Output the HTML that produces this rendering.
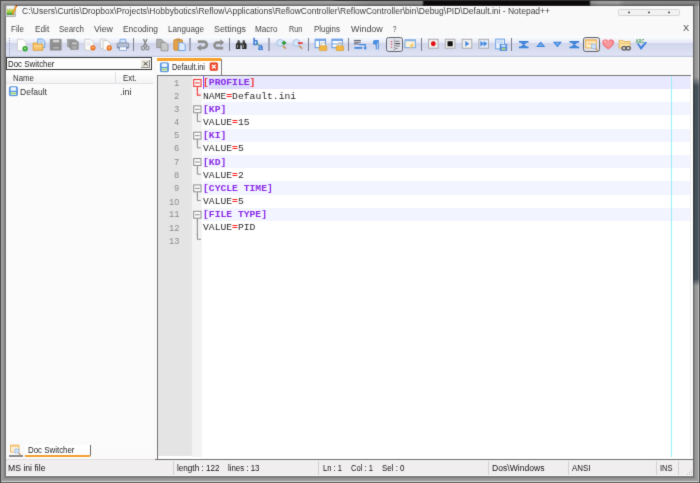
<!DOCTYPE html><html><head><meta charset="utf-8"><title>Notepad++</title><style>

html,body{margin:0;padding:0}
body{width:700px;height:483px;overflow:hidden;position:relative;background:#4c4c4c;font-family:"Liberation Sans",sans-serif}
div,span,svg{position:absolute;box-sizing:border-box}
svg{overflow:visible}
.t{white-space:pre;line-height:1;transform-origin:0 50%;display:block}
.t span{position:static}

</style></head><body><svg width="0" height="0" style="left:0;top:0"><defs><filter id="soft" x="0" y="0" width="100%" height="100%" color-interpolation-filters="sRGB"><feConvolveMatrix order="3" kernelMatrix="0.0113 0.0838 0.0113 0.0838 0.6193 0.0838 0.0113 0.0838 0.0113" edgeMode="duplicate" preserveAlpha="true"/></filter></defs></svg><div id="win" style="left:0;top:0;width:700px;height:483px;filter:url(#soft)">
<div style="left:0;top:0;width:700px;height:483px;background:#8e8e8e"></div>
<div style="left:0;top:0;width:6px;height:483px;clip-path:polygon(0 0,6px 6px,6px 476px,0 483px);background:linear-gradient(90deg,#4a4a4a 0,#4c4c4c 14%,#a0a0a0 24%,#9c9c9c 45%,#8a8a8a 68%,#767676 85%,#6e6e6e 100%)"></div>
<div style="left:692px;top:0;width:8px;height:483px;clip-path:polygon(8px 0,8px 483px,0 476px,0 6px);background:linear-gradient(90deg,rgba(102,102,102,0) 0,rgba(102,102,102,0) 2.500%,#666 11%,#6a6a6a 25%,#868686 31%,#989898 40%,#9a9a9a 75%,#c0c0c0 78%,#c0c0c0 87%,#606060 92%,#5c5c5c 100%)"></div>
<div style="left:0;top:476px;width:700px;height:7px;clip-path:polygon(0 7px,6px 0,692.600px 0,700px 7px);background:linear-gradient(#868686 0,#747474 18%,#949494 36%,#9c9c9c 64%,#cecece 73%,#cecece 82%,#6a6a6a 89%,#606060 100%)"></div>
<div style="left:0;top:0;width:700px;height:6px;clip-path:polygon(0 0,700px 0,692.600px 6px,6px 6px);background:linear-gradient(#4a4a4a 0,#4c4c4c 14%,#a0a0a0 24%,#9e9e9e 50%,#888 70%,#747474 86%,#6a6a6a 100%)"></div>
<div style="left:0;top:0;width:1.200px;height:483px;background:#4a4a4a"></div>
<div style="left:699.200px;top:0;width:.8px;height:483px;background:#505050"></div>
<div style="left:331px;top:0;width:260px;height:1.300px;background:linear-gradient(90deg,#4a4a4a,#2e2e2e 3%,#303030)"></div>
<div style="left:345px;top:1.200px;width:78px;height:4.600px;background:linear-gradient(90deg,rgba(0,0,0,0),rgba(0,0,0,.12) 30%,rgba(0,0,0,.14))"></div>
<div style="left:423.600px;top:1.200px;width:165.600px;height:4.600px;background:#0c0a0a"></div>
<div style="left:422.300px;top:1.200px;width:1.500px;height:4.600px;background:linear-gradient(90deg,rgba(12,10,10,0),#0c0a0a)"></div>
<div style="left:589px;top:1.200px;width:1.800px;height:4.600px;background:linear-gradient(90deg,#0c0a0a,rgba(12,10,10,0))"></div>
<div style="left:423px;top:4.900px;width:167px;height:1px;background:#2a2828"></div>
<div style="left:590px;top:1.200px;width:109px;height:4.600px;background:linear-gradient(90deg,rgba(0,0,0,.12),rgba(0,0,0,.02) 8%,rgba(0,0,0,0) 26%,rgba(0,0,0,.14) 32%,rgba(0,0,0,.16))"></div>
<div style="left:692px;top:77px;width:8px;height:209px;-webkit-mask-image:linear-gradient(180deg,transparent 0,#000 9px,#000 202px,transparent 209px);mask-image:linear-gradient(180deg,transparent 0,#000 9px,#000 202px,transparent 209px);background:linear-gradient(90deg,rgba(58,63,69,0) 0,rgba(58,63,69,0) 2.500%,#3a3f45 11%,#3c4248 30%,#46505a 38%,#46505a 75%,#5e6874 79%,#5e6874 88%,#484a4e 94%,#484a4e 100%)"></div>
<div style="left:6px;top:5.900px;width:686.600px;height:470.100px;background:#f9f9f9"></div>
<div style="left:618px;top:9px;width:62px;height:7px;border:1px solid #d6d6d6;border-radius:1.500px;background:#f2f2f2"></div>
<svg style="left:627px;top:10px" width="5" height="5" viewBox="-0.500 -0.900 5.000 5.000"><circle cx="1.500" cy="1.500" r=".95" fill="#444"/></svg>
<svg style="left:647px;top:10px" width="5" height="5" viewBox="-0.500 -0.900 5.000 5.000"><circle cx="1.500" cy="1.500" r=".95" fill="#444"/></svg>
<svg style="left:667px;top:10px" width="5" height="5" viewBox="-0.500 -0.900 5.000 5.000"><circle cx="1.500" cy="1.500" r=".95" fill="#444"/></svg>
<svg style="left:5px;top:4px" width="15" height="15" viewBox="-0.400 -0.800 15.000 15.000"><defs><linearGradient id="gi" x1="0" y1="0" x2="0" y2="1"><stop offset="0" stop-color="#d6dc5c"/><stop offset=".45" stop-color="#a4d04a"/><stop offset=".75" stop-color="#5cb83a"/><stop offset="1" stop-color="#1f7a24"/></linearGradient></defs><rect x=".5" y=".5" width="9.300" height="11" fill="#e4e4e4" stroke="#9c9c9c" stroke-width=".9"/><rect x="1.500" y="1.200" width="7.300" height="2.600" fill="#f3f3f3"/><rect x="1.500" y="3.600" width="7.300" height=".9" fill="#d4e4f6"/><rect x="1.500" y="4.400" width="7.300" height="5.600" fill="url(#gi)"/><path d="M11 1.200L7 9.600" stroke="#f0941e" stroke-width="1.700"/><path d="M11.500 .3l-.7 1.300" stroke="#8a3a2a" stroke-width="1.500"/></svg>
<div style="left:6px;top:36.400px;width:686.600px;height:20.600px;background:linear-gradient(#fefefe 0,#f3f5fb 14%,#e7eaf6 31%,#d1d6ec 34%,#d6dbef 60%,#dfe3f4 92%,#c4c9e0 95%,#c4c9e0 100%)"></div>
<div style="left:9.200px;top:38px;width:1px;height:1px;background:#98a0c0"></div>
<div style="left:9.200px;top:40px;width:1px;height:1px;background:#98a0c0"></div>
<div style="left:9.200px;top:42px;width:1px;height:1px;background:#98a0c0"></div>
<div style="left:9.200px;top:44px;width:1px;height:1px;background:#98a0c0"></div>
<div style="left:9.200px;top:46px;width:1px;height:1px;background:#98a0c0"></div>
<div style="left:9.200px;top:48px;width:1px;height:1px;background:#98a0c0"></div>
<div style="left:9.200px;top:50px;width:1px;height:1px;background:#98a0c0"></div>
<div style="left:9.200px;top:52px;width:1px;height:1px;background:#98a0c0"></div>
<div style="left:9.200px;top:54px;width:1px;height:1px;background:#98a0c0"></div>
<div style="left:133.2px;top:38px;width:1.100px;height:12.700px;background:#7c7e8a"></div>
<div style="left:189.1px;top:38px;width:1.800px;height:12.700px;background:#a2a6b8"></div>
<div style="left:228.6px;top:38px;width:1.100px;height:12.700px;background:#7c7e8a"></div>
<div style="left:268.2px;top:38px;width:1.800px;height:12.700px;background:#a2a6b8"></div>
<div style="left:308.0px;top:38px;width:1.100px;height:12.700px;background:#7c7e8a"></div>
<div style="left:347.7px;top:38px;width:1.100px;height:12.700px;background:#7c7e8a"></div>
<div style="left:421.2px;top:38px;width:1.100px;height:12.700px;background:#7c7e8a"></div>
<div style="left:511.1px;top:38px;width:1.100px;height:12.700px;background:#7c7e8a"></div>
<div style="left:385.9px;top:37.100px;width:17px;height:14.600px;border:1.500px solid #626670;border-radius:2.600px;background:#e0e2ec"></div>
<div style="left:582.9px;top:37.100px;width:17px;height:14.600px;border:1.500px solid #626670;border-radius:2.600px;background:#e0e2ec"></div>
<svg style="left:14px;top:37px" width="17" height="17" viewBox="-0.692 -0.692 16.346 16.346"><path d="M2.5 1.5h5.5l3 3v8h-8.5z" fill="#fdfdfd" stroke="#c9c9c9" stroke-width=".8"/><circle cx="10" cy="10.6" r="2.6" fill="#3aa83a"/><circle cx="10" cy="10.3" r="1" fill="#9fe08f"/></svg>
<svg style="left:31px;top:37px" width="17" height="16" viewBox="-0.500 -0.404 16.346 15.385"><path d="M6 1.500h4.600l2.200 2.200v6h-6.800z" fill="#cfe2fb" stroke="#5b97e0" stroke-width=".8"/><path d="M8 3.600h2.600M8 5h3" stroke="#8ab4ea" stroke-width=".6"/><path d="M1.500 5.400h3.800l1 1.100h4.600v5.800h-9.400z" fill="#f6c36a" stroke="#e09a2a" stroke-width=".8"/><path d="M2.200 8.400h8" stroke="#fbe2b0" stroke-width=".9"/></svg>
<svg style="left:48px;top:37px" width="16" height="16" viewBox="-0.308 -0.404 15.385 15.385"><path d="M1.800 1.800h10.600v10.400h-10.600z" fill="#909090" stroke="#858585" stroke-width=".6"/><rect x="4.400" y="2.500" width="6" height="2.200" fill="#d8d8d8"/><rect x="4.400" y="8.600" width="6" height="2.600" fill="#b4b4b4" stroke="#7a7a7a" stroke-width=".5"/></svg>
<svg style="left:65px;top:37px" width="17" height="16" viewBox="-0.500 -0.404 16.346 15.385"><rect x="2" y="1.800" width="7" height="6.800" fill="#a8a8a8" stroke="#969696" stroke-width=".7"/><rect x="3.400" y="3" width="7" height="6.800" fill="#a0a0a0" stroke="#909090" stroke-width=".7"/><rect x="4.800" y="4.200" width="7.400" height="7.200" fill="#989898" stroke="#8a8a8a" stroke-width=".7"/><rect x="6.400" y="4.800" width="4.400" height="1.800" fill="#c8c8c8"/><rect x="6.600" y="8.800" width="4" height="2" fill="#b0b0b0"/></svg>
<svg style="left:82px;top:37px" width="16" height="17" viewBox="-0.212 -0.692 15.385 16.346"><path d="M2.500 1.500h5.500l3 3v7.500h-8.500z" fill="#fbfbfb" stroke="#c8c8c8" stroke-width=".8"/><path d="M4 5h4M4 7h4.500" stroke="#d0d0d0" stroke-width=".7"/><circle cx="10.300" cy="9.700" r="2.500" fill="#f0701e"/><circle cx="10.300" cy="9.500" r=".9" fill="#fbd0a8"/></svg>
<svg style="left:98px;top:37px" width="17" height="17" viewBox="-0.692 -0.692 16.346 16.346"><path d="M1.500 1.200h4.600l2.400 2.400v6.600h-7z" fill="#f6f6f6" stroke="#c8c8c8" stroke-width=".8"/><path d="M4.200 2.800h4.400l2.400 2.400v6.600h-6.800z" fill="#fbfbfb" stroke="#c4c4c4" stroke-width=".8"/><circle cx="10.100" cy="9.800" r="2.500" fill="#f0701e"/><circle cx="10.100" cy="9.600" r=".9" fill="#fbd0a8"/></svg>
<svg style="left:115px;top:37px" width="17" height="17" viewBox="-0.788 -0.692 16.346 16.346"><path d="M4 1.500h5.600v4h-5.600z" fill="#d6e6fa" stroke="#6d9be0" stroke-width=".8"/><rect x="1.400" y="5" width="11" height="5.200" rx="1" fill="#b4bfd2" stroke="#7a869e" stroke-width=".8"/><path d="M2 9.400h9.800" stroke="#6a7488" stroke-width="1"/><rect x="3.600" y="8.800" width="6.600" height="3.300" fill="#fafafa" stroke="#7d9ad0" stroke-width=".7"/></svg>
<svg style="left:137px;top:37px" width="17" height="17" viewBox="-0.885 -0.500 16.346 16.346"><path d="M8.700 1.400L5.600 8.200M5.300 1.400L8.400 8.200" stroke="#8a8a8a" stroke-width="1.400" fill="none"/><ellipse cx="4.900" cy="10.100" rx="1.500" ry="1.900" fill="none" stroke="#8a8a8a" stroke-width="1.200"/><ellipse cx="9.100" cy="10.100" rx="1.500" ry="1.900" fill="none" stroke="#8a8a8a" stroke-width="1.200"/></svg>
<svg style="left:155px;top:37px" width="16" height="17" viewBox="-0.212 -0.692 15.385 16.346"><path d="M1.5 1.5h4.5l2 2v6h-6.5z" fill="#b0b0b0" stroke="#8e8e8e" stroke-width=".8"/><path d="M5.6 4.6h4.5l2.2 2.2v5.8h-6.7z" fill="#c9c9c9" stroke="#8e8e8e" stroke-width=".8"/></svg>
<svg style="left:172px;top:37px" width="16" height="17" viewBox="-0.115 -0.500 15.385 16.346"><rect x="1.600" y="2" width="8.400" height="10.200" rx="1.200" fill="#e3a04a" stroke="#cf8c2c" stroke-width=".8"/><rect x="3.800" y="1" width="4" height="2" rx=".5" fill="#c09050"/><path d="M6.400 5h4l2.200 2.200v5.400h-6.200z" fill="#dcebfd" stroke="#5b97e0" stroke-width=".8"/></svg>
<svg style="left:194px;top:38px" width="17" height="16" viewBox="-0.692 -0.019 16.346 15.385"><path d="M3 3.400h5.600a3 3 0 0 1 0 6h-3.400" fill="none" stroke="#8f8f8f" stroke-width="2.600"/><path d="M1.900 9.400l4-3.100v6.200z" fill="#8f8f8f"/></svg>
<svg style="left:211px;top:38px" width="17" height="16" viewBox="-0.692 -0.019 16.346 15.385"><path d="M8.600 4.400h-3.200a2.700 2.700 0 0 0 0 5.400h5.600" fill="none" stroke="#8f8f8f" stroke-width="2.600"/><path d="M12 4.400l-3.800-3.100v6.200z" fill="#8f8f8f"/></svg>
<svg style="left:234px;top:37px" width="15" height="15" viewBox="-0.826 -1.043 16.304 16.304"><path d="M2.600 5l-1.400 2v5h4.800v-5l-.8-2z" fill="#2c2c2c"/><path d="M11.400 5l1.400 2v5h-4.800v-5l.8-2z" fill="#2c2c2c"/><rect x="3" y="2.600" width="2.400" height="3" fill="#444"/><rect x="8.600" y="2.600" width="2.400" height="3" fill="#444"/><rect x="5.600" y="5.200" width="2.800" height="3" fill="#505050"/><rect x="2.400" y="7.400" width="1.300" height="3.400" fill="#8a8a8a"/><rect x="8.800" y="7.400" width="1.300" height="3.400" fill="#8a8a8a"/></svg>
<svg style="left:251px;top:37px" width="16" height="17" viewBox="-0.019 -0.692 15.385 16.346"><text x="1.800" y="6.600" font-family="Liberation Sans, sans-serif" font-size="8" font-weight="bold" fill="#2f74d0" stroke="#2f74d0" stroke-width=".3">b</text><text x="7" y="11.700" font-family="Liberation Sans, sans-serif" font-size="8" font-weight="bold" fill="#2f74d0" stroke="#2f74d0" stroke-width=".3">a</text><path d="M5.800 5.600l2 1.800" stroke="#4aa05a" stroke-width="1"/></svg>
<svg style="left:275px;top:38px" width="14" height="14" viewBox="-0.386 -0.159 15.909 15.909"><circle cx="5.4" cy="5.4" r="3.9" fill="#d4e6fa" stroke="#9db9dc" stroke-width=".9"/><path d="M8.4 8.6l3.6 3.4" stroke="#c9935a" stroke-width="1.8"/><path d="M7.4 5.4h5M9.9 2.9v5" stroke="#2f9a3a" stroke-width="1.8"/></svg>
<svg style="left:291px;top:38px" width="14" height="14" viewBox="-0.727 -0.159 15.909 15.909"><circle cx="5.4" cy="5.4" r="3.9" fill="#d4e6fa" stroke="#9db9dc" stroke-width=".9"/><path d="M8.4 8.6l3.6 3.4" stroke="#c9935a" stroke-width="1.8"/><path d="M7.2 5.6h5.4" stroke="#e23a3a" stroke-width="2"/></svg>
<svg style="left:313px;top:37px" width="17" height="17" viewBox="-0.885 -0.692 16.346 16.346"><rect x="1.200" y="1.400" width="10" height="8.200" fill="#fbfdff" stroke="#5590dc" stroke-width=".9"/><rect x="1.200" y="1.400" width="10" height="1.700" fill="#6ea2e6"/><path d="M5.400 3.100v6.500" stroke="#5590dc" stroke-width=".8"/><rect x="5.200" y="7.800" width="7.200" height="4.600" rx=".6" fill="#f2b844" stroke="#d8982c" stroke-width=".6"/><path d="M6.900 7.800v-1.300a1.900 1.900 0 0 1 3.800 0v1.300" fill="none" stroke="#cfc8b8" stroke-width="1.100"/></svg>
<svg style="left:330px;top:37px" width="17" height="17" viewBox="-0.692 -0.692 16.346 16.346"><rect x="1.200" y="1.400" width="10" height="8.200" fill="#fbfdff" stroke="#5590dc" stroke-width=".9"/><rect x="1.200" y="1.400" width="10" height="1.700" fill="#6ea2e6"/><path d="M1.200 6h10" stroke="#5590dc" stroke-width=".8"/><rect x="5.200" y="7.800" width="7.200" height="4.600" rx=".6" fill="#f2b844" stroke="#d8982c" stroke-width=".6"/><path d="M6.900 7.800v-1.300a1.900 1.900 0 0 1 3.800 0v1.300" fill="none" stroke="#cfc8b8" stroke-width="1.100"/></svg>
<svg style="left:352px;top:37px" width="17" height="17" viewBox="-0.692 -0.692 16.346 16.346"><path d="M1.200 2.600h6.600M1.200 4.300h6.600M1.200 6h4.600" stroke="#50505c" stroke-width=".9"/><path d="M6 6.600h6v3.800" stroke="#3f86dc" stroke-width="1.200" fill="none"/><path d="M1.600 9.800h7.600" stroke="#3f86dc" stroke-width="1.700"/><path d="M10.200 9.400h3.600l-1.800 2.400z" fill="#3f86dc"/></svg>
<svg style="left:369px;top:37px" width="16" height="17" viewBox="-0.308 -0.692 15.385 16.346"><path d="M6.700 2.600v8.800M8.600 2.600v8.800" stroke="#4a8ee0" stroke-width="1"/><path d="M9.400 2.300h-3.800a2.200 2.200 0 0 0 0 4.400h1.200z" fill="#4a8ee0"/></svg>
<svg style="left:387px;top:37px" width="16" height="17" viewBox="-0.019 -0.692 15.385 16.346"><path d="M4.300 3.200v7" stroke="#e05a6a" stroke-width="1.200" stroke-dasharray="1.300 1.300"/><path d="M7 1.800v11" stroke="#666" stroke-width=".8" stroke-dasharray="1 .8"/><path d="M7.800 3.400h4.200M7.800 8h4.400M7.800 10.300h2.400" stroke="#777" stroke-width=".9"/><path d="M7.800 5.700h4.800" stroke="#444" stroke-width="1.100"/></svg>
<svg style="left:403px;top:37px" width="16" height="17" viewBox="-0.308 -0.692 15.385 16.346"><rect x="1.600" y="2" width="10" height="7.600" fill="#fdf4da" stroke="#6aa0e4" stroke-width=".9"/><rect x="1.600" y="2" width="10" height="1.400" fill="#8ab6ec"/><path d="M10.800 4.200l-5.200 3.200h2.400l-3.200 4.400 6-5h-2.600l2.600-2.600z" fill="#f6c050"/></svg>
<svg style="left:426px;top:37px" width="16" height="17" viewBox="-0.019 -0.692 15.385 16.346"><rect x="2.400" y="1.500" width="9.200" height="8.600" fill="#f0f0f0" stroke="#a8a8a8" stroke-width=".9"/><circle cx="7" cy="5.800" r="2.300" fill="#e01010"/></svg>
<svg style="left:442px;top:37px" width="17" height="17" viewBox="-0.788 -0.692 16.346 16.346"><rect x="2.400" y="1.500" width="9.200" height="8.600" fill="#f0f0f0" stroke="#a8a8a8" stroke-width=".9"/><rect x="4.500" y="3.400" width="5" height="4.800" fill="#111"/></svg>
<svg style="left:459px;top:37px" width="17" height="17" viewBox="-0.692 -0.692 16.346 16.346"><rect x="2.400" y="1.500" width="9.200" height="8.600" fill="#f0f0f0" stroke="#a8a8a8" stroke-width=".9"/><path d="M5.400 3.200l3.800 2.600-3.800 2.600z" fill="#3f86dc"/></svg>
<svg style="left:476px;top:37px" width="16" height="17" viewBox="-0.404 -0.692 15.385 16.346"><rect x="2.400" y="1.500" width="9.200" height="8.600" fill="#dfe9f8" stroke="#a8a8a8" stroke-width=".9"/><path d="M3.800 3.200l3.400 2.600-3.400 2.600zM7 3.200l3.400 2.600-3.400 2.600z" fill="#3f86dc"/></svg>
<svg style="left:494px;top:37px" width="15" height="16" viewBox="-0.143 -0.755 15.306 16.327"><rect x="1.6" y="1.4" width="9" height="10" fill="#eef4fd" stroke="#5b97e0" stroke-width=".9"/><path d="M3 3.4h6M3 5.2h6" stroke="#9fc2ee" stroke-width=".8"/><rect x="6" y="6.6" width="7" height="6.4" fill="#5b97e0" stroke="#3a78c8" stroke-width=".6"/><rect x="7.4" y="7.2" width="4.2" height="2" fill="#d8e8fb"/><rect x="7.6" y="10.6" width="3.8" height="1.8" fill="#b8d878"/></svg>
<svg style="left:516px;top:37px" width="16" height="16" viewBox="-0.404 -0.308 15.385 15.385"><path d="M2.400 3.500h9.200v1.500h-9.200zM2.400 9.100h9.200v1.500h-9.200zM3.600 5h6.800l-3.400 2.300zM3.600 9.100h6.800l-3.400-2.300z" fill="#2f7bd6"/><path d="M2.400 4.900h9.200M2.400 9.200h9.200" stroke="#6aa4e8" stroke-width=".5"/></svg>
<svg style="left:533px;top:37px" width="16" height="17" viewBox="-0.404 -0.692 15.385 16.346"><path d="M7 3.600l4.400 5.300h-8.800z" fill="#3f86dc"/><path d="M7 5.600l2 2.400h-4z" fill="#7fb0ea"/></svg>
<svg style="left:550px;top:37px" width="16" height="17" viewBox="-0.115 -0.692 15.385 16.346"><path d="M7 9.200l4.400-5.300h-8.800z" fill="#3f86dc"/><path d="M7 7.200l2-2.400h-4z" fill="#7fb0ea"/></svg>
<svg style="left:567px;top:37px" width="16" height="16" viewBox="-0.019 -0.308 15.385 15.385"><path d="M2.400 3.500h9.200v1.500h-9.200zM2.400 9.100h9.200v1.500h-9.200zM3.600 5h6.800l-3.400 2.300zM3.600 9.100h6.800l-3.400-2.300z" fill="#2f7bd6"/><path d="M2.400 4.900h9.200M2.400 9.200h9.200" stroke="#6aa4e8" stroke-width=".5"/></svg>
<svg style="left:584px;top:37px" width="16" height="17" viewBox="-0.404 -0.692 15.385 16.346"><rect x="1.200" y="2" width="10.200" height="7.800" fill="#fdecc8" stroke="#efb55a" stroke-width="1"/><rect x="1.200" y="2" width="10.200" height="1.500" fill="#f3c070"/><path d="M2.800 5.800h5.400" stroke="#efb55a" stroke-width=".9"/><rect x="7" y="6.200" width="4" height="4.200" fill="#cfe2fb" stroke="#8ab4ea" stroke-width=".7"/><path d="M10.800 10.400l2 2" stroke="#c9935a" stroke-width="1.300"/></svg>
<svg style="left:600px;top:37px" width="17" height="17" viewBox="-0.885 -0.692 16.346 16.346"><path d="M7 11.300C3.200 8.600 1.300 6.800 1.300 4.700a2.750 2.750 0 0 1 5.700-.5 2.750 2.750 0 0 1 5.700.5c0 2.100-1.900 3.900-5.700 6.600z" fill="#f2767e"/><path d="M7 9.600C4.600 7.800 3 6.400 3 5a1.500 1.500 0 0 1 4-.2 1.500 1.500 0 0 1 4 .2c0 1.400-1.600 2.800-4 4.600z" fill="#f79a9e"/><path d="M2.800 4.200a1.400 1.400 0 0 1 2-.8" stroke="#fdd" stroke-width=".9" fill="none"/></svg>
<svg style="left:617px;top:37px" width="17" height="17" viewBox="-0.500 -0.692 16.346 16.346"><path d="M1.500 2.600h3.800l1 1.100h5.600v6.200h-10.400z" fill="#f9e0a4" stroke="#e4b04a" stroke-width=".8"/><path d="M2.600 5.400h8.200" stroke="#ecc060" stroke-width=".8"/><ellipse cx="6.300" cy="10.100" rx="2.100" ry="1.700" fill="#c8c8c8" stroke="#4a4a4a" stroke-width="1"/><ellipse cx="10.300" cy="10.100" rx="2.100" ry="1.700" fill="#c8c8c8" stroke="#4a4a4a" stroke-width="1"/></svg>
<svg style="left:633px;top:37px" width="17" height="17" viewBox="-0.885 -0.692 16.346 16.346"><text x="1.600" y="5.400" font-family="Liberation Sans, sans-serif" font-size="4.800" font-weight="bold" fill="#4a9a5a" textLength="8.600" lengthAdjust="spacingAndGlyphs">ABC</text><path d="M2.800 5.600l1.300-.6 2.700 3.400 4.300-4.600 1.500.9-5.800 7.200z" fill="#3a80d8"/></svg>
<div style="left:6px;top:57px;width:686.600px;height:19px;background:#fafafa"></div>
<div style="left:6px;top:57px;width:147px;height:402px;background:#fbfbfb"></div>
<div style="left:6px;top:57px;width:146px;height:13px;border:1.200px solid #3a3a3a;border-right-width:1.500px;background:#fdfdfd"></div>
<div style="left:141.200px;top:59.700px;width:9.200px;height:8.200px;background:#e8e4d8;border-right:1px solid #8a8a8a;border-bottom:1px solid #8a8a8a"></div>
<svg style="left:142px;top:60px" width="8" height="8" viewBox="-0.600 -0.600 8.000 8.000"><path d="M1 1.200l4 3.600M5 1.200l-4 3.600" stroke="#222" stroke-width=".85"/></svg>
<div style="left:6px;top:71.500px;width:147px;height:12px;background:linear-gradient(#ffffff,#f3f3f5);border-bottom:1px solid #e3e3e6"></div>
<div style="left:115px;top:72px;width:1px;height:11px;background:#e0e0e4"></div>
<svg style="left:8px;top:86px" width="11" height="12" viewBox="-0.870 -0.220 11.957 13.200"><rect x=".6" y=".6" width="8.800" height="9.800" rx="1" fill="#5b9ae6" stroke="#3f7fd4" stroke-width=".8"/><rect x="2" y="1.200" width="6" height="3.800" fill="#eef5fe"/><rect x="2" y="6.400" width="6" height="3.200" fill="#d8efc0"/><path d="M2 7.800h6" stroke="#8ac05a" stroke-width=".8"/></svg>
<div style="left:153px;top:57px;width:4px;height:402px;background:#f9f9f9"></div>
<div style="left:6px;top:441px;width:147px;height:18px;background:#fafafa"></div>
<svg style="left:9px;top:443px" width="14" height="14" viewBox="-0.500 -0.600 14.000 14.000"><rect x="1" y="1.500" width="8.500" height="7" fill="#fdf0d6" stroke="#eeb45c" stroke-width=".9"/><rect x="1" y="1.500" width="8.500" height="1.500" fill="#f3c070"/><rect x="5.400" y="5.400" width="4" height="4" fill="#cfe2fb" stroke="#8ab4ea" stroke-width=".6"/><path d="M9 9.400l2 1.800" stroke="#c9935a" stroke-width="1.200"/></svg>
<div style="left:9px;top:455.400px;width:14px;height:1.400px;background:#8a8a8a"></div>
<div style="left:25px;top:444.500px;width:66px;height:12.700px;background:#fff;border-right:1.200px solid #6a6a6a;border-bottom:2.200px solid #f2a030;border-radius:0 0 2px 0"></div>
<div style="left:157px;top:58.500px;width:64.700px;height:16.500px;background:#fdfdfd;border-right:1.300px solid #7c7c7c"></div>
<div style="left:157px;top:58.400px;width:64.200px;height:3px;background:#f7a22c"></div>
<svg style="left:159px;top:62px" width="12" height="12" viewBox="-0.870 -0.330 13.043 13.200"><rect x=".6" y=".6" width="8.800" height="9.800" rx="1" fill="#5b9ae6" stroke="#3f7fd4" stroke-width=".8"/><rect x="2" y="1.200" width="6" height="3.800" fill="#eef5fe"/><rect x="2" y="6.400" width="6" height="3.200" fill="#d8efc0"/><path d="M2 7.800h6" stroke="#8ac05a" stroke-width=".8"/></svg>
<svg style="left:209px;top:62px" width="11" height="10" viewBox="-0.600 -0.400 11.000 10.000"><rect x=".4" y=".4" width="7.600" height="7.600" rx="1" fill="#f04a2a" stroke="#d83a1e" stroke-width=".6"/><path d="M2.300 2.300l3.800 3.800M6.100 2.300l-3.800 3.800" stroke="#fff" stroke-width="1.300"/></svg>
<div style="left:156.6px;top:74.6px;width:536.0px;height:385.1px;background:#fff;border-top:1.200px solid #787878;border-left:1.300px solid #747474;border-bottom:1.300px solid #707070"></div>
<div style="left:157.600px;top:75.800px;width:34.200px;height:380.500px;background:#e4e4e4"></div>
<div style="left:191.800px;top:76px;width:10.200px;height:380.500px;background:#f3f3f3"></div>
<div style="left:690px;top:76px;width:1.200px;height:381px;background:#efefef"></div>
<div style="left:691px;top:74px;width:1.600px;height:2px;background:#fdfdfd"></div>
<div style="left:203px;top:75.90px;width:486.700px;height:13.18px;background:#e8e8ff"></div>
<div style="left:208.6px;top:78.30px;width:41.5px;height:10.78px;background:#dadafa"></div>
<div style="left:203px;top:102.26px;width:486.700px;height:13.18px;background:#f2f4ff"></div>
<div style="left:203px;top:128.62px;width:486.700px;height:13.18px;background:#f2f4ff"></div>
<div style="left:203px;top:154.98px;width:486.700px;height:13.18px;background:#f2f4ff"></div>
<div style="left:203px;top:181.34px;width:486.700px;height:13.18px;background:#f2f4ff"></div>
<div style="left:203px;top:207.70px;width:486.700px;height:13.18px;background:#f2f4ff"></div>
<div style="left:670.900px;top:76px;width:1.300px;height:380.500px;background:#9aeef6"></div>
<div style="left:202.800px;top:75.9px;width:1.100px;height:13.2px;background:#8a4af0"></div>
<svg style="left:192px;top:75px" width="12" height="16" viewBox="-0.250 -0.940 12.000 16.000"><rect x="1.450" y="3.550" width="7.300" height="6.900" fill="#fafafa" stroke="#f23c3c" stroke-width="1.1"/><path d="M2.800 7h4.600" stroke="#f23c3c" stroke-width="1.1"/><path d="M5.100 10.450v3.800" stroke="#f23c3c" stroke-width="1.1"/></svg>
<svg style="left:192px;top:89px" width="12" height="16" viewBox="-0.250 -0.120 12.000 16.000"><path d="M5.100 -.4v6.400h3.400" fill="none" stroke="#f23c3c" stroke-width="1.1"/></svg>
<svg style="left:192px;top:102px" width="12" height="16" viewBox="-0.250 -0.300 12.000 16.000"><rect x="1.450" y="3.550" width="7.300" height="6.900" fill="#fafafa" stroke="#8c8c8c" stroke-width="1"/><path d="M2.800 7h4.600" stroke="#8c8c8c" stroke-width="1"/><path d="M5.100 10.450v3.800" stroke="#8c8c8c" stroke-width="1"/></svg>
<svg style="left:192px;top:115px" width="12" height="16" viewBox="-0.250 -0.480 12.000 16.000"><path d="M5.100 -.4v6.400h3.400" fill="none" stroke="#8c8c8c" stroke-width="1"/></svg>
<svg style="left:192px;top:128px" width="12" height="16" viewBox="-0.250 -0.660 12.000 16.000"><rect x="1.450" y="3.550" width="7.300" height="6.900" fill="#fafafa" stroke="#8c8c8c" stroke-width="1"/><path d="M2.800 7h4.600" stroke="#8c8c8c" stroke-width="1"/><path d="M5.100 10.450v3.800" stroke="#8c8c8c" stroke-width="1"/></svg>
<svg style="left:192px;top:141px" width="12" height="16" viewBox="-0.250 -0.840 12.000 16.000"><path d="M5.100 -.4v6.400h3.400" fill="none" stroke="#8c8c8c" stroke-width="1"/></svg>
<svg style="left:192px;top:155px" width="12" height="16" viewBox="-0.250 -0.020 12.000 16.000"><rect x="1.450" y="3.550" width="7.300" height="6.900" fill="#fafafa" stroke="#8c8c8c" stroke-width="1"/><path d="M2.800 7h4.600" stroke="#8c8c8c" stroke-width="1"/><path d="M5.100 10.450v3.800" stroke="#8c8c8c" stroke-width="1"/></svg>
<svg style="left:192px;top:168px" width="12" height="16" viewBox="-0.250 -0.200 12.000 16.000"><path d="M5.100 -.4v6.400h3.400" fill="none" stroke="#8c8c8c" stroke-width="1"/></svg>
<svg style="left:192px;top:181px" width="12" height="16" viewBox="-0.250 -0.380 12.000 16.000"><rect x="1.450" y="3.550" width="7.300" height="6.900" fill="#fafafa" stroke="#8c8c8c" stroke-width="1"/><path d="M2.800 7h4.600" stroke="#8c8c8c" stroke-width="1"/><path d="M5.100 10.450v3.800" stroke="#8c8c8c" stroke-width="1"/></svg>
<svg style="left:192px;top:194px" width="12" height="16" viewBox="-0.250 -0.560 12.000 16.000"><path d="M5.100 -.4v6.400h3.400" fill="none" stroke="#8c8c8c" stroke-width="1"/></svg>
<svg style="left:192px;top:207px" width="12" height="16" viewBox="-0.250 -0.740 12.000 16.000"><rect x="1.450" y="3.550" width="7.300" height="6.900" fill="#fafafa" stroke="#8c8c8c" stroke-width="1"/><path d="M2.800 7h4.600" stroke="#8c8c8c" stroke-width="1"/><path d="M5.100 10.450v3.800" stroke="#8c8c8c" stroke-width="1"/></svg>
<svg style="left:192px;top:220px" width="12" height="16" viewBox="-0.250 -0.920 12.000 16.000"><path d="M5.100 -.4v14.600" fill="none" stroke="#8c8c8c" stroke-width="1"/></svg>
<svg style="left:192px;top:234px" width="12" height="16" viewBox="-0.250 -0.100 12.000 16.000"><path d="M5.100 -.4v5.600h3.600" fill="none" stroke="#8c8c8c" stroke-width="1"/></svg>
<div style="left:155.200px;top:458.500px;width:3px;height:1.300px;background:#707070"></div>
<div style="left:6px;top:458.700px;width:149px;height:1.100px;background:#dcdcdc"></div>
<div style="left:6px;top:459.800px;width:686.600px;height:16.400px;background:#f0eeee"></div>
<div style="left:6px;top:474.700px;width:686.600px;height:1.300px;background:#fcfcfc"></div>
<div style="left:173px;top:461px;width:1px;height:14px;background:#d2d0d0"></div>
<div style="left:318.2px;top:461px;width:1px;height:14px;background:#d2d0d0"></div>
<div style="left:488.2px;top:461px;width:1px;height:14px;background:#d2d0d0"></div>
<div style="left:568px;top:461px;width:1px;height:14px;background:#d2d0d0"></div>
<div style="left:656.3px;top:461px;width:1px;height:14px;background:#d2d0d0"></div>
<div style="left:678.4px;top:461px;width:1px;height:14px;background:#d2d0d0"></div>
<div style="left:690.8px;top:473.6px;width:1.300px;height:1.300px;background:#c2bfbf"></div>
<div style="left:690.8px;top:471.6px;width:1.300px;height:1.300px;background:#c2bfbf"></div>
<div style="left:690.8px;top:469.5px;width:1.300px;height:1.300px;background:#c2bfbf"></div>
<div style="left:688.7px;top:473.6px;width:1.300px;height:1.300px;background:#c2bfbf"></div>
<div style="left:688.7px;top:471.6px;width:1.300px;height:1.300px;background:#c2bfbf"></div>
<div style="left:686.6px;top:473.6px;width:1.300px;height:1.300px;background:#c2bfbf"></div>
<span class="t" id="t0" style='top:7.27px;font-size:8.3px;color:#3c3c3c;font-family:"Liberation Sans", sans-serif;left:22px;transform:scaleX(1.0232);'>C:\Users\Curtis\Dropbox\Projects\Hobbybotics\Reflow\Applications\ReflowController\ReflowController\bin\Debug\PID\Default.ini - Notepad++</span>
<span class="t" id="t1" style='top:24.77px;font-size:8.3px;color:#484848;font-family:"Liberation Sans", sans-serif;left:11.3px;transform:scaleX(0.9645);'>File</span>
<span class="t" id="t2" style='top:24.77px;font-size:8.3px;color:#484848;font-family:"Liberation Sans", sans-serif;left:34.6px;transform:scaleX(0.9932);'>Edit</span>
<span class="t" id="t3" style='top:24.77px;font-size:8.3px;color:#484848;font-family:"Liberation Sans", sans-serif;left:59px;transform:scaleX(0.9507);'>Search</span>
<span class="t" id="t4" style='top:24.77px;font-size:8.3px;color:#484848;font-family:"Liberation Sans", sans-serif;left:94px;transform:scaleX(1.0648);'>View</span>
<span class="t" id="t5" style='top:24.77px;font-size:8.3px;color:#484848;font-family:"Liberation Sans", sans-serif;left:123px;transform:scaleX(1.0113);'>Encoding</span>
<span class="t" id="t6" style='top:24.77px;font-size:8.3px;color:#484848;font-family:"Liberation Sans", sans-serif;left:168px;transform:scaleX(0.9750);'>Language</span>
<span class="t" id="t7" style='top:24.77px;font-size:8.3px;color:#484848;font-family:"Liberation Sans", sans-serif;left:214px;transform:scaleX(1.0672);'>Settings</span>
<span class="t" id="t8" style='top:24.77px;font-size:8.3px;color:#484848;font-family:"Liberation Sans", sans-serif;left:255.4px;transform:scaleX(0.9799);'>Macro</span>
<span class="t" id="t9" style='top:24.77px;font-size:8.3px;color:#484848;font-family:"Liberation Sans", sans-serif;left:289.2px;transform:scaleX(0.8796);'>Run</span>
<span class="t" id="t10" style='top:24.77px;font-size:8.3px;color:#484848;font-family:"Liberation Sans", sans-serif;left:314.2px;transform:scaleX(0.9552);'>Plugins</span>
<span class="t" id="t11" style='top:24.77px;font-size:8.3px;color:#484848;font-family:"Liberation Sans", sans-serif;left:350.7px;transform:scaleX(1.0774);'>Window</span>
<span class="t" id="t12" style='top:24.77px;font-size:8.3px;color:#484848;font-family:"Liberation Sans", sans-serif;left:392.8px;transform:scaleX(0.7351);'>?</span>
<span class="t" id="t13" style='top:24.17px;font-size:8.3px;color:#484848;font-family:"Liberation Sans", sans-serif;left:683px;transform:scaleX(1.1177);'>X</span>
<span class="t" id="t14" style='top:60.19px;font-size:8.4px;color:#222;font-family:"Liberation Sans", sans-serif;left:7.6px;transform:scaleX(0.9424);'>Doc Switcher</span>
<span class="t" id="t15" style='top:73.57px;font-size:8.3px;color:#333;font-family:"Liberation Sans", sans-serif;left:13px;transform:scaleX(0.9485);'>Name</span>
<span class="t" id="t16" style='top:73.57px;font-size:8.3px;color:#333;font-family:"Liberation Sans", sans-serif;left:123px;transform:scaleX(0.9443);'>Ext.</span>
<span class="t" id="t17" style='top:87.77px;font-size:8.3px;color:#333;font-family:"Liberation Sans", sans-serif;left:20px;transform:scaleX(1.0267);'>Default</span>
<span class="t" id="t18" style='top:87.77px;font-size:8.3px;color:#333;font-family:"Liberation Sans", sans-serif;left:120px;transform:scaleX(1.0839);'>.ini</span>
<span class="t" id="t19" style='top:446.19px;font-size:8.4px;color:#222;font-family:"Liberation Sans", sans-serif;left:27.5px;transform:scaleX(0.9424);'>Doc Switcher</span>
<span class="t" id="t20" style='top:62.97px;font-size:8.3px;color:#222;font-family:"Liberation Sans", sans-serif;left:172px;transform:scaleX(0.8942);'>Default.ini</span>
<span class="t" id="t21" style='top:464.37px;font-size:8.3px;color:#141414;font-family:"Liberation Sans", sans-serif;left:7.5px;transform:scaleX(1.0426);'>MS ini file</span>
<span class="t" id="t22" style='top:464.37px;font-size:8.3px;color:#141414;font-family:"Liberation Sans", sans-serif;left:176.5px;transform:scaleX(0.9798);'>length : 122</span>
<span class="t" id="t23" style='top:464.37px;font-size:8.3px;color:#141414;font-family:"Liberation Sans", sans-serif;left:228px;transform:scaleX(0.9483);'>lines : 13</span>
<span class="t" id="t24" style='top:464.37px;font-size:8.3px;color:#141414;font-family:"Liberation Sans", sans-serif;left:323px;transform:scaleX(0.9150);'>Ln : 1</span>
<span class="t" id="t25" style='top:464.37px;font-size:8.3px;color:#141414;font-family:"Liberation Sans", sans-serif;left:351px;transform:scaleX(0.9173);'>Col : 1</span>
<span class="t" id="t26" style='top:464.37px;font-size:8.3px;color:#141414;font-family:"Liberation Sans", sans-serif;left:381.5px;transform:scaleX(0.9562);'>Sel : 0</span>
<span class="t" id="t27" style='top:464.37px;font-size:8.3px;color:#141414;font-family:"Liberation Sans", sans-serif;left:491.5px;transform:scaleX(1.0351);'>Dos\Windows</span>
<span class="t" id="t28" style='top:464.37px;font-size:8.3px;color:#141414;font-family:"Liberation Sans", sans-serif;left:572px;transform:scaleX(0.9548);'>ANSI</span>
<span class="t" id="t29" style='top:464.37px;font-size:8.3px;color:#141414;font-family:"Liberation Sans", sans-serif;left:660px;transform:scaleX(0.9029);'>INS</span>
<span class="t" id="t30" style='top:79.58px;font-size:8.6px;color:#8c8c8c;font-family:"Liberation Mono", monospace;left:174.05px;transform:scaleX(1.0151);'>1</span>
<span class="t" id="t31" style='top:79.48px;font-size:8.6px;color:#8a2be8;font-family:"Liberation Mono", monospace;font-weight:bold;left:203.3px;transform:scaleX(1.1276);'><span style="color:#f03030">[</span>PROFILE<span style="color:#f03030">]</span></span>
<span class="t" id="t32" style='top:92.76px;font-size:8.6px;color:#8c8c8c;font-family:"Liberation Mono", monospace;left:174.05px;transform:scaleX(1.0151);'>2</span>
<span class="t" id="t33" style='top:92.66px;font-size:8.6px;color:#2b2b2b;font-family:"Liberation Mono", monospace;left:203.3px;transform:scaleX(1.1281);'>NAME<span style="color:#ff2020;font-weight:bold">=</span>Default.ini</span>
<span class="t" id="t34" style='top:105.94px;font-size:8.6px;color:#8c8c8c;font-family:"Liberation Mono", monospace;left:174.05px;transform:scaleX(1.0151);'>3</span>
<span class="t" id="t35" style='top:105.84px;font-size:8.6px;color:#8a2be8;font-family:"Liberation Mono", monospace;font-weight:bold;left:203.3px;transform:scaleX(1.1279);'>[KP]</span>
<span class="t" id="t36" style='top:119.12px;font-size:8.6px;color:#8c8c8c;font-family:"Liberation Mono", monospace;left:174.05px;transform:scaleX(1.0151);'>4</span>
<span class="t" id="t37" style='top:119.02px;font-size:8.6px;color:#2b2b2b;font-family:"Liberation Mono", monospace;left:203.3px;transform:scaleX(1.1274);'>VALUE<span style="color:#ff2020;font-weight:bold">=</span>15</span>
<span class="t" id="t38" style='top:132.30px;font-size:8.6px;color:#8c8c8c;font-family:"Liberation Mono", monospace;left:174.05px;transform:scaleX(1.0151);'>5</span>
<span class="t" id="t39" style='top:132.20px;font-size:8.6px;color:#8a2be8;font-family:"Liberation Mono", monospace;font-weight:bold;left:203.3px;transform:scaleX(1.1279);'>[KI]</span>
<span class="t" id="t40" style='top:145.48px;font-size:8.6px;color:#8c8c8c;font-family:"Liberation Mono", monospace;left:174.05px;transform:scaleX(1.0151);'>6</span>
<span class="t" id="t41" style='top:145.38px;font-size:8.6px;color:#2b2b2b;font-family:"Liberation Mono", monospace;left:203.3px;transform:scaleX(1.1273);'>VALUE<span style="color:#ff2020;font-weight:bold">=</span>5</span>
<span class="t" id="t42" style='top:158.66px;font-size:8.6px;color:#8c8c8c;font-family:"Liberation Mono", monospace;left:174.05px;transform:scaleX(1.0151);'>7</span>
<span class="t" id="t43" style='top:158.56px;font-size:8.6px;color:#8a2be8;font-family:"Liberation Mono", monospace;font-weight:bold;left:203.3px;transform:scaleX(1.1279);'>[KD]</span>
<span class="t" id="t44" style='top:171.84px;font-size:8.6px;color:#8c8c8c;font-family:"Liberation Mono", monospace;left:174.05px;transform:scaleX(1.0151);'>8</span>
<span class="t" id="t45" style='top:171.74px;font-size:8.6px;color:#2b2b2b;font-family:"Liberation Mono", monospace;left:203.3px;transform:scaleX(1.1273);'>VALUE<span style="color:#ff2020;font-weight:bold">=</span>2</span>
<span class="t" id="t46" style='top:185.02px;font-size:8.6px;color:#8c8c8c;font-family:"Liberation Mono", monospace;left:174.05px;transform:scaleX(1.0151);'>9</span>
<span class="t" id="t47" style='top:184.92px;font-size:8.6px;color:#8a2be8;font-family:"Liberation Mono", monospace;font-weight:bold;left:203.3px;transform:scaleX(1.1284);'>[CYCLE TIME]</span>
<span class="t" id="t48" style='top:198.20px;font-size:8.6px;color:#8c8c8c;font-family:"Liberation Mono", monospace;left:168.8px;transform:scaleX(1.0136);'>1<span style="font-family:Liberation Sans,sans-serif;letter-spacing:.4px">0</span></span>
<span class="t" id="t49" style='top:198.10px;font-size:8.6px;color:#2b2b2b;font-family:"Liberation Mono", monospace;left:203.3px;transform:scaleX(1.1273);'>VALUE<span style="color:#ff2020;font-weight:bold">=</span>5</span>
<span class="t" id="t50" style='top:211.38px;font-size:8.6px;color:#8c8c8c;font-family:"Liberation Mono", monospace;left:168.8px;transform:scaleX(1.0166);'>11</span>
<span class="t" id="t51" style='top:211.28px;font-size:8.6px;color:#8a2be8;font-family:"Liberation Mono", monospace;font-weight:bold;left:203.3px;transform:scaleX(1.1284);'>[FILE TYPE]</span>
<span class="t" id="t52" style='top:224.56px;font-size:8.6px;color:#8c8c8c;font-family:"Liberation Mono", monospace;left:168.8px;transform:scaleX(1.0166);'>12</span>
<span class="t" id="t53" style='top:224.46px;font-size:8.6px;color:#2b2b2b;font-family:"Liberation Mono", monospace;left:203.3px;transform:scaleX(1.1276);'>VALUE<span style="color:#ff2020;font-weight:bold">=</span>PID</span>
<span class="t" id="t54" style='top:237.74px;font-size:8.6px;color:#8c8c8c;font-family:"Liberation Mono", monospace;left:168.8px;transform:scaleX(1.0166);'>13</span>
</div></body></html>
